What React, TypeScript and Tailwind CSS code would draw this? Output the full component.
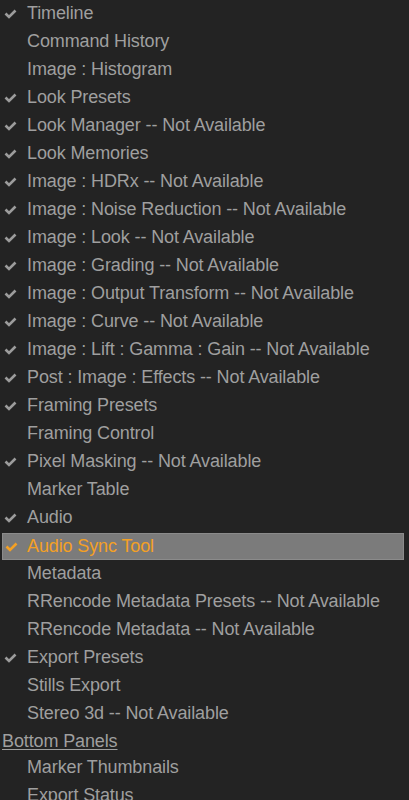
const items: { label: string; checked?: boolean; active?: boolean; heading?: boolean }[] = [
  { label: "Timeline", checked: true },
  { label: "Command History" },
  { label: "Image : Histogram" },
  { label: "Look Presets", checked: true },
  { label: "Look Manager -- Not Available", checked: true },
  { label: "Look Memories", checked: true },
  { label: "Image : HDRx -- Not Available", checked: true },
  { label: "Image : Noise Reduction -- Not Available", checked: true },
  { label: "Image : Look -- Not Available", checked: true },
  { label: "Image : Grading -- Not Available", checked: true },
  { label: "Image : Output Transform -- Not Available", checked: true },
  { label: "Image : Curve -- Not Available", checked: true },
  { label: "Image : Lift : Gamma : Gain -- Not Available", checked: true },
  { label: "Post : Image : Effects -- Not Available", checked: true },
  { label: "Framing Presets", checked: true },
  { label: "Framing Control" },
  { label: "Pixel Masking -- Not Available", checked: true },
  { label: "Marker Table" },
  { label: "Audio", checked: true },
  { label: "Audio Sync Tool", checked: true, active: true },
  { label: "Metadata" },
  { label: "RRencode Metadata Presets -- Not Available" },
  { label: "RRencode Metadata -- Not Available" },
  { label: "Export Presets", checked: true },
  { label: "Stills Export" },
  { label: "Stereo 3d -- Not Available" },
  { label: "Bottom Panels", heading: true },
  { label: "Marker Thumbnails" },
  { label: "Export Status" },
];

function Check({ color }: { color: string }) {
  return (
    <svg width="13" height="10" viewBox="0 0 13 10" className="absolute left-[4px] top-[9px]">
      <path d="M1.5 4.5 L5 8 L11.5 1.5" fill="none" stroke={color} strokeWidth="2.6" />
    </svg>
  );
}

export default function App() {
  return (
    <div
      className="w-[409px] h-[800px] overflow-hidden bg-[#232323] text-[18px] tracking-[-0.12px] text-[#9f9f9f]"
      style={{ fontFamily: '"Liberation Sans", Arial, sans-serif' }}
    >
      {items.map((it, i) => {
        if (it.heading) {
          return (
            <div key={i} className="h-[26px] pl-[2px] leading-[26px] underline underline-offset-2">
              {it.label}
            </div>
          );
        }
        if (it.active) {
          return (
            <div key={i} className="h-7 pt-px">
              <div className="relative ml-[2px] w-[402px] h-[27px] bg-[#7b7b7b] border border-[#8b8b8b] text-[#f4a024]">
                <svg width="13" height="10" viewBox="0 0 13 10" className="absolute left-[2px] top-[8px]">
                  <path d="M1.5 4.5 L5 8 L11.5 1.5" fill="none" stroke="#f4a024" strokeWidth="2.6" />
                </svg>
                <div className="pl-[24px] leading-[25px]">{it.label}</div>
              </div>
            </div>
          );
        }
        return (
          <div key={i} className="relative h-7 pl-[27px] leading-[26px]">
            {it.checked && <Check color="#9c9c9c" />}
            {it.label}
          </div>
        );
      })}
    </div>
  );
}
